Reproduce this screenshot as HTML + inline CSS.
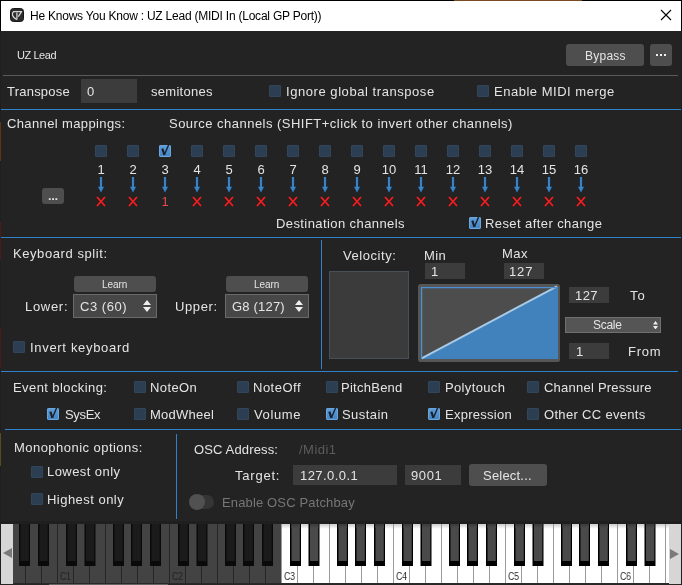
<!DOCTYPE html>
<html><head><meta charset="utf-8"><style>
html,body{margin:0;padding:0;}
body{width:682px;height:585px;background:#000;position:relative;overflow:hidden;font-family:"Liberation Sans", sans-serif;}
.r{position:absolute;}
.t{position:absolute;white-space:pre;line-height:normal;font-family:"Liberation Sans", sans-serif;will-change:transform;}
</style></head><body>
<div class="r" style="left:1px;top:1px;width:680px;height:30px;background:#fff;"></div><div class="r" style="left:1px;top:31px;width:680px;height:553px;background:#232323;"></div>
<div class="r" style="left:1px;top:521px;width:680px;height:64px;background:#1f1f1f;"></div>
<svg class="r" style="left:0;top:0" width="682" height="585" viewBox="0 0 682 585"><defs><linearGradient id="wg" x1="0" y1="0" x2="0" y2="1"><stop offset="0" stop-color="#cdcdcd"/><stop offset="1" stop-color="#fff"/></linearGradient><linearGradient id="bg" x1="0" y1="0" x2="0" y2="1"><stop offset="0" stop-color="#3a3a3a"/><stop offset="1" stop-color="#4a4a4a"/></linearGradient></defs><rect x="-55" y="524" width="16" height="59" fill="#434343"/><rect x="-55" y="524" width="1" height="59" fill="#262626"/><rect x="-39" y="524" width="16" height="59" fill="#434343"/><rect x="-39" y="524" width="1" height="59" fill="#262626"/><rect x="-23" y="524" width="16" height="59" fill="#434343"/><rect x="-23" y="524" width="1" height="59" fill="#262626"/><rect x="-7" y="524" width="16" height="59" fill="#434343"/><rect x="-7" y="524" width="1" height="59" fill="#262626"/><rect x="9" y="524" width="16" height="59" fill="#434343"/><rect x="9" y="524" width="1" height="59" fill="#262626"/><rect x="25" y="524" width="16" height="59" fill="#434343"/><rect x="25" y="524" width="1" height="59" fill="#262626"/><rect x="41" y="524" width="16" height="59" fill="#434343"/><rect x="41" y="524" width="1" height="59" fill="#262626"/><rect x="-46" y="524" width="11" height="42" fill="#0a0a0a"/><rect x="-44.5" y="524" width="8.3" height="37" fill="#1b1b1b"/><rect x="-27.5" y="524" width="11" height="42" fill="#0a0a0a"/><rect x="-26.0" y="524" width="8.3" height="37" fill="#1b1b1b"/><rect x="1" y="524" width="11" height="42" fill="#0a0a0a"/><rect x="2.5" y="524" width="8.3" height="37" fill="#1b1b1b"/><rect x="19" y="524" width="11" height="42" fill="#0a0a0a"/><rect x="20.5" y="524" width="8.3" height="37" fill="#1b1b1b"/><rect x="38" y="524" width="11" height="42" fill="#0a0a0a"/><rect x="39.5" y="524" width="8.3" height="37" fill="#1b1b1b"/><rect x="57" y="524" width="16" height="59" fill="#434343"/><rect x="57" y="524" width="1" height="59" fill="#262626"/><rect x="73" y="524" width="16" height="59" fill="#434343"/><rect x="73" y="524" width="1" height="59" fill="#262626"/><rect x="89" y="524" width="16" height="59" fill="#434343"/><rect x="89" y="524" width="1" height="59" fill="#262626"/><rect x="105" y="524" width="16" height="59" fill="#434343"/><rect x="105" y="524" width="1" height="59" fill="#262626"/><rect x="121" y="524" width="16" height="59" fill="#434343"/><rect x="121" y="524" width="1" height="59" fill="#262626"/><rect x="137" y="524" width="16" height="59" fill="#434343"/><rect x="137" y="524" width="1" height="59" fill="#262626"/><rect x="153" y="524" width="16" height="59" fill="#434343"/><rect x="153" y="524" width="1" height="59" fill="#262626"/><rect x="66" y="524" width="11" height="42" fill="#0a0a0a"/><rect x="67.5" y="524" width="8.3" height="37" fill="#1b1b1b"/><rect x="84.5" y="524" width="11" height="42" fill="#0a0a0a"/><rect x="86.0" y="524" width="8.3" height="37" fill="#1b1b1b"/><rect x="113" y="524" width="11" height="42" fill="#0a0a0a"/><rect x="114.5" y="524" width="8.3" height="37" fill="#1b1b1b"/><rect x="131" y="524" width="11" height="42" fill="#0a0a0a"/><rect x="132.5" y="524" width="8.3" height="37" fill="#1b1b1b"/><rect x="150" y="524" width="11" height="42" fill="#0a0a0a"/><rect x="151.5" y="524" width="8.3" height="37" fill="#1b1b1b"/><rect x="169" y="524" width="16" height="59" fill="#434343"/><rect x="169" y="524" width="1" height="59" fill="#262626"/><rect x="185" y="524" width="16" height="59" fill="#434343"/><rect x="185" y="524" width="1" height="59" fill="#262626"/><rect x="201" y="524" width="16" height="59" fill="#434343"/><rect x="201" y="524" width="1" height="59" fill="#262626"/><rect x="217" y="524" width="16" height="59" fill="#434343"/><rect x="217" y="524" width="1" height="59" fill="#262626"/><rect x="233" y="524" width="16" height="59" fill="#434343"/><rect x="233" y="524" width="1" height="59" fill="#262626"/><rect x="249" y="524" width="16" height="59" fill="#434343"/><rect x="249" y="524" width="1" height="59" fill="#262626"/><rect x="265" y="524" width="16" height="59" fill="#434343"/><rect x="265" y="524" width="1" height="59" fill="#262626"/><rect x="178" y="524" width="11" height="42" fill="#0a0a0a"/><rect x="179.5" y="524" width="8.3" height="37" fill="#1b1b1b"/><rect x="196.5" y="524" width="11" height="42" fill="#0a0a0a"/><rect x="198.0" y="524" width="8.3" height="37" fill="#1b1b1b"/><rect x="225" y="524" width="11" height="42" fill="#0a0a0a"/><rect x="226.5" y="524" width="8.3" height="37" fill="#1b1b1b"/><rect x="243" y="524" width="11" height="42" fill="#0a0a0a"/><rect x="244.5" y="524" width="8.3" height="37" fill="#1b1b1b"/><rect x="262" y="524" width="11" height="42" fill="#0a0a0a"/><rect x="263.5" y="524" width="8.3" height="37" fill="#1b1b1b"/><rect x="281" y="524" width="16" height="59" fill="#fff"/><rect x="281" y="524" width="16" height="5" fill="url(#wg)"/><rect x="281" y="524" width="1" height="59" fill="#9a9a9a"/><rect x="297" y="524" width="16" height="59" fill="#fff"/><rect x="297" y="524" width="16" height="5" fill="url(#wg)"/><rect x="297" y="524" width="1" height="59" fill="#9a9a9a"/><rect x="313" y="524" width="16" height="59" fill="#fff"/><rect x="313" y="524" width="16" height="5" fill="url(#wg)"/><rect x="313" y="524" width="1" height="59" fill="#9a9a9a"/><rect x="329" y="524" width="16" height="59" fill="#fff"/><rect x="329" y="524" width="16" height="5" fill="url(#wg)"/><rect x="329" y="524" width="1" height="59" fill="#9a9a9a"/><rect x="345" y="524" width="16" height="59" fill="#fff"/><rect x="345" y="524" width="16" height="5" fill="url(#wg)"/><rect x="345" y="524" width="1" height="59" fill="#9a9a9a"/><rect x="361" y="524" width="16" height="59" fill="#fff"/><rect x="361" y="524" width="16" height="5" fill="url(#wg)"/><rect x="361" y="524" width="1" height="59" fill="#9a9a9a"/><rect x="377" y="524" width="16" height="59" fill="#fff"/><rect x="377" y="524" width="16" height="5" fill="url(#wg)"/><rect x="377" y="524" width="1" height="59" fill="#9a9a9a"/><rect x="290" y="524" width="11" height="42" fill="#000"/><rect x="291.5" y="524" width="8.3" height="37" fill="#4a4a4a"/><rect x="291.5" y="524" width="8.3" height="4" fill="url(#bg)"/><rect x="308.5" y="524" width="11" height="42" fill="#000"/><rect x="310.0" y="524" width="8.3" height="37" fill="#4a4a4a"/><rect x="310.0" y="524" width="8.3" height="4" fill="url(#bg)"/><rect x="337" y="524" width="11" height="42" fill="#000"/><rect x="338.5" y="524" width="8.3" height="37" fill="#4a4a4a"/><rect x="338.5" y="524" width="8.3" height="4" fill="url(#bg)"/><rect x="355" y="524" width="11" height="42" fill="#000"/><rect x="356.5" y="524" width="8.3" height="37" fill="#4a4a4a"/><rect x="356.5" y="524" width="8.3" height="4" fill="url(#bg)"/><rect x="374" y="524" width="11" height="42" fill="#000"/><rect x="375.5" y="524" width="8.3" height="37" fill="#4a4a4a"/><rect x="375.5" y="524" width="8.3" height="4" fill="url(#bg)"/><rect x="393" y="524" width="16" height="59" fill="#fff"/><rect x="393" y="524" width="16" height="5" fill="url(#wg)"/><rect x="393" y="524" width="1" height="59" fill="#9a9a9a"/><rect x="409" y="524" width="16" height="59" fill="#fff"/><rect x="409" y="524" width="16" height="5" fill="url(#wg)"/><rect x="409" y="524" width="1" height="59" fill="#9a9a9a"/><rect x="425" y="524" width="16" height="59" fill="#fff"/><rect x="425" y="524" width="16" height="5" fill="url(#wg)"/><rect x="425" y="524" width="1" height="59" fill="#9a9a9a"/><rect x="441" y="524" width="16" height="59" fill="#fff"/><rect x="441" y="524" width="16" height="5" fill="url(#wg)"/><rect x="441" y="524" width="1" height="59" fill="#9a9a9a"/><rect x="457" y="524" width="16" height="59" fill="#fff"/><rect x="457" y="524" width="16" height="5" fill="url(#wg)"/><rect x="457" y="524" width="1" height="59" fill="#9a9a9a"/><rect x="473" y="524" width="16" height="59" fill="#fff"/><rect x="473" y="524" width="16" height="5" fill="url(#wg)"/><rect x="473" y="524" width="1" height="59" fill="#9a9a9a"/><rect x="489" y="524" width="16" height="59" fill="#fff"/><rect x="489" y="524" width="16" height="5" fill="url(#wg)"/><rect x="489" y="524" width="1" height="59" fill="#9a9a9a"/><rect x="402" y="524" width="11" height="42" fill="#000"/><rect x="403.5" y="524" width="8.3" height="37" fill="#4a4a4a"/><rect x="403.5" y="524" width="8.3" height="4" fill="url(#bg)"/><rect x="420.5" y="524" width="11" height="42" fill="#000"/><rect x="422.0" y="524" width="8.3" height="37" fill="#4a4a4a"/><rect x="422.0" y="524" width="8.3" height="4" fill="url(#bg)"/><rect x="449" y="524" width="11" height="42" fill="#000"/><rect x="450.5" y="524" width="8.3" height="37" fill="#4a4a4a"/><rect x="450.5" y="524" width="8.3" height="4" fill="url(#bg)"/><rect x="467" y="524" width="11" height="42" fill="#000"/><rect x="468.5" y="524" width="8.3" height="37" fill="#4a4a4a"/><rect x="468.5" y="524" width="8.3" height="4" fill="url(#bg)"/><rect x="486" y="524" width="11" height="42" fill="#000"/><rect x="487.5" y="524" width="8.3" height="37" fill="#4a4a4a"/><rect x="487.5" y="524" width="8.3" height="4" fill="url(#bg)"/><rect x="505" y="524" width="16" height="59" fill="#fff"/><rect x="505" y="524" width="16" height="5" fill="url(#wg)"/><rect x="505" y="524" width="1" height="59" fill="#9a9a9a"/><rect x="521" y="524" width="16" height="59" fill="#fff"/><rect x="521" y="524" width="16" height="5" fill="url(#wg)"/><rect x="521" y="524" width="1" height="59" fill="#9a9a9a"/><rect x="537" y="524" width="16" height="59" fill="#fff"/><rect x="537" y="524" width="16" height="5" fill="url(#wg)"/><rect x="537" y="524" width="1" height="59" fill="#9a9a9a"/><rect x="553" y="524" width="16" height="59" fill="#fff"/><rect x="553" y="524" width="16" height="5" fill="url(#wg)"/><rect x="553" y="524" width="1" height="59" fill="#9a9a9a"/><rect x="569" y="524" width="16" height="59" fill="#fff"/><rect x="569" y="524" width="16" height="5" fill="url(#wg)"/><rect x="569" y="524" width="1" height="59" fill="#9a9a9a"/><rect x="585" y="524" width="16" height="59" fill="#fff"/><rect x="585" y="524" width="16" height="5" fill="url(#wg)"/><rect x="585" y="524" width="1" height="59" fill="#9a9a9a"/><rect x="601" y="524" width="16" height="59" fill="#fff"/><rect x="601" y="524" width="16" height="5" fill="url(#wg)"/><rect x="601" y="524" width="1" height="59" fill="#9a9a9a"/><rect x="514" y="524" width="11" height="42" fill="#000"/><rect x="515.5" y="524" width="8.3" height="37" fill="#4a4a4a"/><rect x="515.5" y="524" width="8.3" height="4" fill="url(#bg)"/><rect x="532.5" y="524" width="11" height="42" fill="#000"/><rect x="534.0" y="524" width="8.3" height="37" fill="#4a4a4a"/><rect x="534.0" y="524" width="8.3" height="4" fill="url(#bg)"/><rect x="561" y="524" width="11" height="42" fill="#000"/><rect x="562.5" y="524" width="8.3" height="37" fill="#4a4a4a"/><rect x="562.5" y="524" width="8.3" height="4" fill="url(#bg)"/><rect x="579" y="524" width="11" height="42" fill="#000"/><rect x="580.5" y="524" width="8.3" height="37" fill="#4a4a4a"/><rect x="580.5" y="524" width="8.3" height="4" fill="url(#bg)"/><rect x="598" y="524" width="11" height="42" fill="#000"/><rect x="599.5" y="524" width="8.3" height="37" fill="#4a4a4a"/><rect x="599.5" y="524" width="8.3" height="4" fill="url(#bg)"/><rect x="617" y="524" width="16" height="59" fill="#fff"/><rect x="617" y="524" width="16" height="5" fill="url(#wg)"/><rect x="617" y="524" width="1" height="59" fill="#9a9a9a"/><rect x="633" y="524" width="16" height="59" fill="#fff"/><rect x="633" y="524" width="16" height="5" fill="url(#wg)"/><rect x="633" y="524" width="1" height="59" fill="#9a9a9a"/><rect x="649" y="524" width="16" height="59" fill="#fff"/><rect x="649" y="524" width="16" height="5" fill="url(#wg)"/><rect x="649" y="524" width="1" height="59" fill="#9a9a9a"/><rect x="665" y="524" width="16" height="59" fill="#fff"/><rect x="665" y="524" width="16" height="5" fill="url(#wg)"/><rect x="665" y="524" width="1" height="59" fill="#9a9a9a"/><rect x="681" y="524" width="16" height="59" fill="#fff"/><rect x="681" y="524" width="16" height="5" fill="url(#wg)"/><rect x="681" y="524" width="1" height="59" fill="#9a9a9a"/><rect x="626" y="524" width="11" height="42" fill="#000"/><rect x="627.5" y="524" width="8.3" height="37" fill="#4a4a4a"/><rect x="627.5" y="524" width="8.3" height="4" fill="url(#bg)"/><rect x="644.5" y="524" width="11" height="42" fill="#000"/><rect x="646.0" y="524" width="8.3" height="37" fill="#4a4a4a"/><rect x="646.0" y="524" width="8.3" height="4" fill="url(#bg)"/><rect x="673" y="524" width="11" height="42" fill="#000"/><rect x="674.5" y="524" width="8.3" height="37" fill="#4a4a4a"/><rect x="674.5" y="524" width="8.3" height="4" fill="url(#bg)"/><rect x="691" y="524" width="11" height="42" fill="#000"/><rect x="692.5" y="524" width="8.3" height="37" fill="#4a4a4a"/><rect x="692.5" y="524" width="8.3" height="4" fill="url(#bg)"/><rect x="710" y="524" width="11" height="42" fill="#000"/><rect x="711.5" y="524" width="8.3" height="37" fill="#4a4a4a"/><rect x="711.5" y="524" width="8.3" height="4" fill="url(#bg)"/><rect x="738" y="524" width="11" height="42" fill="#000"/><rect x="739.5" y="524" width="8.3" height="37" fill="#4a4a4a"/><rect x="739.5" y="524" width="8.3" height="4" fill="url(#bg)"/><rect x="756.5" y="524" width="11" height="42" fill="#000"/><rect x="758.0" y="524" width="8.3" height="37" fill="#4a4a4a"/><rect x="758.0" y="524" width="8.3" height="4" fill="url(#bg)"/><rect x="785" y="524" width="11" height="42" fill="#000"/><rect x="786.5" y="524" width="8.3" height="37" fill="#4a4a4a"/><rect x="786.5" y="524" width="8.3" height="4" fill="url(#bg)"/><rect x="803" y="524" width="11" height="42" fill="#000"/><rect x="804.5" y="524" width="8.3" height="37" fill="#4a4a4a"/><rect x="804.5" y="524" width="8.3" height="4" fill="url(#bg)"/><rect x="822" y="524" width="11" height="42" fill="#000"/><rect x="823.5" y="524" width="8.3" height="37" fill="#4a4a4a"/><rect x="823.5" y="524" width="8.3" height="4" fill="url(#bg)"/></svg>
<div class="t" style="left:60px;top:570px;font-size:10.5px;color:#222;transform:scaleX(0.82);transform-origin:0 0">C1</div>
<div class="t" style="left:172px;top:570px;font-size:10.5px;color:#222;transform:scaleX(0.82);transform-origin:0 0">C2</div>
<div class="t" style="left:284px;top:570px;font-size:10.5px;color:#2a2a2a;transform:scaleX(0.82);transform-origin:0 0">C3</div>
<div class="t" style="left:396px;top:570px;font-size:10.5px;color:#2a2a2a;transform:scaleX(0.82);transform-origin:0 0">C4</div>
<div class="t" style="left:508px;top:570px;font-size:10.5px;color:#2a2a2a;transform:scaleX(0.82);transform-origin:0 0">C5</div>
<div class="t" style="left:620px;top:570px;font-size:10.5px;color:#2a2a2a;transform:scaleX(0.82);transform-origin:0 0">C6</div>
<div class="r" style="left:1px;top:524px;width:12px;height:60px;background:#d6d6d6;"></div>
<svg class="r" style="left:3px;top:548px" width="9" height="11" viewBox="0 0 9 11"><path d="M0 5 L9 0 V10 Z" fill="#7a7a7a"/></svg>
<div class="r" style="left:669px;top:524px;width:12px;height:60px;background:#d6d6d6;"></div>
<svg class="r" style="left:670px;top:549px" width="9" height="11" viewBox="0 0 9 11"><path d="M9 5 L0 0 V10 Z" fill="#7a7a7a"/></svg>
<div class="r" style="left:13px;top:583px;width:656px;height:1px;background:#2a2a2a;"></div>
<div class="r" style="left:1px;top:584px;width:680px;height:1px;background:#262626;"></div>
<div class="r" style="left:49px;top:584px;width:119px;height:1px;background:#646464;"></div>
<div class="r" style="left:3px;top:75px;width:675px;height:1px;background:#5a5a5a;"></div><div class="r" style="left:1px;top:109px;width:680px;height:1px;background:#3080ca;"></div><div class="r" style="left:1px;top:237px;width:680px;height:1px;background:#3080ca;"></div><div class="r" style="left:321px;top:240px;width:1px;height:129px;background:#3080ca;"></div><div class="r" style="left:1px;top:371px;width:677px;height:1px;background:#3080ca;"></div><div class="r" style="left:5px;top:429px;width:676px;height:1px;background:#3080ca;"></div><div class="r" style="left:176px;top:434px;width:1px;height:85px;background:#3080ca;"></div><div class="r" style="left:566px;top:44px;width:78px;height:22px;background:#4e4e4e;border-radius:3px"></div><div class="r" style="left:650px;top:44px;width:22px;height:22px;background:#4e4e4e;border-radius:3px"></div><div class="r" style="left:42px;top:188px;width:22px;height:16px;background:#4e4e4e;border-radius:3px"></div><div class="r" style="left:74px;top:276px;width:82px;height:16px;background:#4e4e4e;border-radius:3px"></div><div class="r" style="left:226px;top:276px;width:82px;height:16px;background:#4e4e4e;border-radius:3px"></div><div class="r" style="left:469px;top:464px;width:78px;height:22px;background:#4e4e4e;border-radius:3px"></div><div class="r" style="left:656px;top:54px;width:2px;height:2px;background:#f0f0f0;"></div><div class="r" style="left:660px;top:54px;width:2px;height:2px;background:#f0f0f0;"></div><div class="r" style="left:664px;top:54px;width:2px;height:2px;background:#f0f0f0;"></div><svg class="r" style="left:42px;top:188px" width="22" height="16" viewBox="0 0 22 16"><rect x="6.8" y="10.2" width="1.9" height="1.8" fill="#e0e0e0"/><rect x="10.1" y="10.2" width="1.9" height="1.8" fill="#e0e0e0"/><rect x="13.4" y="10.2" width="1.9" height="1.8" fill="#e0e0e0"/></svg><div class="r" style="left:81px;top:79px;width:56px;height:24px;background:#3c3c3c;"></div><div class="r" style="left:425px;top:263px;width:40px;height:16px;background:#3c3c3c;"></div><div class="r" style="left:504px;top:263px;width:40px;height:16px;background:#3c3c3c;"></div><div class="r" style="left:569px;top:287px;width:40px;height:16px;background:#3c3c3c;"></div><div class="r" style="left:569px;top:343px;width:40px;height:16px;background:#3c3c3c;"></div><div class="r" style="left:293px;top:465px;width:104px;height:20px;background:#3c3c3c;"></div><div class="r" style="left:405px;top:465px;width:56px;height:20px;background:#3c3c3c;"></div><div class="r" style="left:73px;top:294px;width:84px;height:24px;background:#474747;box-sizing:border-box;border:1px solid #6a6a6a"></div><div class="r" style="left:225px;top:294px;width:84px;height:24px;background:#474747;box-sizing:border-box;border:1px solid #6a6a6a"></div><div class="r" style="left:565px;top:317px;width:96px;height:16px;background:#555;box-sizing:border-box;border:1px solid #707070"></div><div class="r" style="left:329px;top:271px;width:80px;height:88px;background:#3b3b3b;box-sizing:border-box;border:1px solid #48505a"></div><div class="r" style="left:95px;top:145px;width:12px;height:12px;background:#2b3e52;border-radius:1px;box-sizing:border-box;border:1px solid #31465b"></div><div class="r" style="left:127px;top:145px;width:12px;height:12px;background:#2b3e52;border-radius:1px;box-sizing:border-box;border:1px solid #31465b"></div><div class="r" style="left:159px;top:145px;width:12px;height:12px;background:linear-gradient(#5c9cd8,#4585c5);border-radius:1px;box-sizing:border-box;border:1px solid #6aa6dc"></div><svg class="r" style="left:159px;top:143px" width="14" height="15" viewBox="0 0 14 15"><path d="M3.3 5.6 L5.4 11.8" stroke="#18202a" stroke-width="2.1" fill="none"/><path d="M5.4 11.8 L10 1" stroke="#18202a" stroke-width="1.4" fill="none"/></svg><div class="r" style="left:191px;top:145px;width:12px;height:12px;background:#2b3e52;border-radius:1px;box-sizing:border-box;border:1px solid #31465b"></div><div class="r" style="left:223px;top:145px;width:12px;height:12px;background:#2b3e52;border-radius:1px;box-sizing:border-box;border:1px solid #31465b"></div><div class="r" style="left:255px;top:145px;width:12px;height:12px;background:#2b3e52;border-radius:1px;box-sizing:border-box;border:1px solid #31465b"></div><div class="r" style="left:287px;top:145px;width:12px;height:12px;background:#2b3e52;border-radius:1px;box-sizing:border-box;border:1px solid #31465b"></div><div class="r" style="left:319px;top:145px;width:12px;height:12px;background:#2b3e52;border-radius:1px;box-sizing:border-box;border:1px solid #31465b"></div><div class="r" style="left:351px;top:145px;width:12px;height:12px;background:#2b3e52;border-radius:1px;box-sizing:border-box;border:1px solid #31465b"></div><div class="r" style="left:383px;top:145px;width:12px;height:12px;background:#2b3e52;border-radius:1px;box-sizing:border-box;border:1px solid #31465b"></div><div class="r" style="left:415px;top:145px;width:12px;height:12px;background:#2b3e52;border-radius:1px;box-sizing:border-box;border:1px solid #31465b"></div><div class="r" style="left:447px;top:145px;width:12px;height:12px;background:#2b3e52;border-radius:1px;box-sizing:border-box;border:1px solid #31465b"></div><div class="r" style="left:479px;top:145px;width:12px;height:12px;background:#2b3e52;border-radius:1px;box-sizing:border-box;border:1px solid #31465b"></div><div class="r" style="left:511px;top:145px;width:12px;height:12px;background:#2b3e52;border-radius:1px;box-sizing:border-box;border:1px solid #31465b"></div><div class="r" style="left:543px;top:145px;width:12px;height:12px;background:#2b3e52;border-radius:1px;box-sizing:border-box;border:1px solid #31465b"></div><div class="r" style="left:575px;top:145px;width:12px;height:12px;background:#2b3e52;border-radius:1px;box-sizing:border-box;border:1px solid #31465b"></div><div class="r" style="left:269px;top:85px;width:12px;height:12px;background:#2b3e52;border-radius:1px;box-sizing:border-box;border:1px solid #31465b"></div><div class="r" style="left:477px;top:85px;width:12px;height:12px;background:#2b3e52;border-radius:1px;box-sizing:border-box;border:1px solid #31465b"></div><div class="r" style="left:469px;top:217px;width:12px;height:12px;background:linear-gradient(#5c9cd8,#4585c5);border-radius:1px;box-sizing:border-box;border:1px solid #6aa6dc"></div><svg class="r" style="left:469px;top:215px" width="14" height="15" viewBox="0 0 14 15"><path d="M3.3 5.6 L5.4 11.8" stroke="#18202a" stroke-width="2.1" fill="none"/><path d="M5.4 11.8 L10 1" stroke="#18202a" stroke-width="1.4" fill="none"/></svg><div class="r" style="left:13px;top:341px;width:12px;height:12px;background:#2b3e52;border-radius:1px;box-sizing:border-box;border:1px solid #31465b"></div><div class="r" style="left:134px;top:381px;width:12px;height:12px;background:#2b3e52;border-radius:1px;box-sizing:border-box;border:1px solid #31465b"></div><div class="r" style="left:237px;top:381px;width:12px;height:12px;background:#2b3e52;border-radius:1px;box-sizing:border-box;border:1px solid #31465b"></div><div class="r" style="left:326px;top:381px;width:12px;height:12px;background:#2b3e52;border-radius:1px;box-sizing:border-box;border:1px solid #31465b"></div><div class="r" style="left:428px;top:381px;width:12px;height:12px;background:#2b3e52;border-radius:1px;box-sizing:border-box;border:1px solid #31465b"></div><div class="r" style="left:527px;top:381px;width:12px;height:12px;background:#2b3e52;border-radius:1px;box-sizing:border-box;border:1px solid #31465b"></div><div class="r" style="left:47px;top:408px;width:12px;height:12px;background:linear-gradient(#5c9cd8,#4585c5);border-radius:1px;box-sizing:border-box;border:1px solid #6aa6dc"></div><svg class="r" style="left:47px;top:406px" width="14" height="15" viewBox="0 0 14 15"><path d="M3.3 5.6 L5.4 11.8" stroke="#18202a" stroke-width="2.1" fill="none"/><path d="M5.4 11.8 L10 1" stroke="#18202a" stroke-width="1.4" fill="none"/></svg><div class="r" style="left:134px;top:408px;width:12px;height:12px;background:#2b3e52;border-radius:1px;box-sizing:border-box;border:1px solid #31465b"></div><div class="r" style="left:237px;top:408px;width:12px;height:12px;background:#2b3e52;border-radius:1px;box-sizing:border-box;border:1px solid #31465b"></div><div class="r" style="left:326px;top:408px;width:12px;height:12px;background:linear-gradient(#5c9cd8,#4585c5);border-radius:1px;box-sizing:border-box;border:1px solid #6aa6dc"></div><svg class="r" style="left:326px;top:406px" width="14" height="15" viewBox="0 0 14 15"><path d="M3.3 5.6 L5.4 11.8" stroke="#18202a" stroke-width="2.1" fill="none"/><path d="M5.4 11.8 L10 1" stroke="#18202a" stroke-width="1.4" fill="none"/></svg><div class="r" style="left:428px;top:408px;width:12px;height:12px;background:linear-gradient(#5c9cd8,#4585c5);border-radius:1px;box-sizing:border-box;border:1px solid #6aa6dc"></div><svg class="r" style="left:428px;top:406px" width="14" height="15" viewBox="0 0 14 15"><path d="M3.3 5.6 L5.4 11.8" stroke="#18202a" stroke-width="2.1" fill="none"/><path d="M5.4 11.8 L10 1" stroke="#18202a" stroke-width="1.4" fill="none"/></svg><div class="r" style="left:527px;top:408px;width:12px;height:12px;background:#2b3e52;border-radius:1px;box-sizing:border-box;border:1px solid #31465b"></div><div class="r" style="left:31px;top:466px;width:12px;height:12px;background:#2b3e52;border-radius:1px;box-sizing:border-box;border:1px solid #31465b"></div><div class="r" style="left:31px;top:493px;width:12px;height:12px;background:#2b3e52;border-radius:1px;box-sizing:border-box;border:1px solid #31465b"></div><svg class="r" style="left:143px;top:300px" width="8" height="12" viewBox="0 0 8 12"><path d="M0 5.0 L4.0 0 L8 5.0 Z M0 7.0 L4.0 12 L8 7.0 Z" fill="#eee"/></svg><svg class="r" style="left:295px;top:300px" width="8" height="12" viewBox="0 0 8 12"><path d="M0 5.0 L4.0 0 L8 5.0 Z M0 7.0 L4.0 12 L8 7.0 Z" fill="#eee"/></svg><svg class="r" style="left:652.5px;top:320.5px" width="5" height="8.5" viewBox="0 0 5 8.5"><path d="M0 3.5 L2.5 0 L5 3.5 Z M0 5.0 L2.5 8.5 L5 5.0 Z" fill="#eee"/></svg><svg class="r" style="left:418px;top:284px" width="142" height="78" viewBox="0 0 142 78">
<rect x="0" y="0" width="142" height="78" rx="2.5" fill="#565656"/>
<rect x="3" y="3" width="137" height="72" fill="#4d4d4d"/>
<path d="M3.5 74.5 L139 2.5 L140 3 L140 75 L3 75 Z" fill="#4182bc"/>
<path d="M3.6 74.4 L139 2.4" stroke="#a8cae6" stroke-width="2"/>
<path d="M3.6 75 V3.6 H140" stroke="#4a90d4" stroke-width="1.3" fill="none"/>
</svg><div class="r" style="left:190px;top:495px;width:24px;height:14px;background:#353535;border-radius:7px"></div><div class="r" style="left:189px;top:494px;width:16px;height:16px;background:#515151;border-radius:8px"></div><svg class="r" style="left:660px;top:9px" width="12" height="12" viewBox="0 0 12 12"><path d="M1 1 L11 11 M11 1 L1 11" stroke="#000" stroke-width="1.1"/></svg><svg class="r" style="left:10px;top:8px" width="14" height="14" viewBox="0 0 14 14"><rect x="0.5" y="0.5" width="13" height="13" rx="3" fill="#2c2c2c" stroke="#141414" stroke-width="1"/><path d="M3.6 3.6 H11.6 L8.3 8.6 M3.6 3.6 C1.4 5.5 2 9.5 6.9 11.6" stroke="#d4d4d4" stroke-width="1.3" fill="none" stroke-linejoin="round"/><path d="M6.9 4.6 V11.6" stroke="#bcbcbc" stroke-width="1.5"/></svg>
<div class="t c" style="left:81px;top:162px;width:40px;text-align:center;font-size:13px;color:#e4e4e4">1</div>
<svg class="r" style="left:96px;top:176px" width="10" height="18" viewBox="0 0 10 18"><path d="M5 1 V11" stroke="#3585c8" stroke-width="2.2"/><path d="M2 10.8 L8 10.8 L5 16.6 Z" fill="#3585c8"/></svg>
<svg class="r" style="left:96px;top:196px" width="10" height="11" viewBox="0 0 10 11"><path d="M1 1 L9 10 M9 1 L1 10" stroke="#ff1a1a" stroke-width="1.7"/></svg>
<div class="t c" style="left:113px;top:162px;width:40px;text-align:center;font-size:13px;color:#e4e4e4">2</div>
<svg class="r" style="left:128px;top:176px" width="10" height="18" viewBox="0 0 10 18"><path d="M5 1 V11" stroke="#3585c8" stroke-width="2.2"/><path d="M2 10.8 L8 10.8 L5 16.6 Z" fill="#3585c8"/></svg>
<svg class="r" style="left:128px;top:196px" width="10" height="11" viewBox="0 0 10 11"><path d="M1 1 L9 10 M9 1 L1 10" stroke="#ff1a1a" stroke-width="1.7"/></svg>
<div class="t c" style="left:145px;top:162px;width:40px;text-align:center;font-size:13px;color:#e4e4e4">3</div>
<svg class="r" style="left:160px;top:176px" width="10" height="18" viewBox="0 0 10 18"><path d="M5 1 V11" stroke="#3585c8" stroke-width="2.2"/><path d="M2 10.8 L8 10.8 L5 16.6 Z" fill="#3585c8"/></svg>
<div class="t c" style="left:145px;top:194px;width:40px;text-align:center;font-size:13px;color:#e84a4a">1</div>
<div class="t c" style="left:177px;top:162px;width:40px;text-align:center;font-size:13px;color:#e4e4e4">4</div>
<svg class="r" style="left:192px;top:176px" width="10" height="18" viewBox="0 0 10 18"><path d="M5 1 V11" stroke="#3585c8" stroke-width="2.2"/><path d="M2 10.8 L8 10.8 L5 16.6 Z" fill="#3585c8"/></svg>
<svg class="r" style="left:192px;top:196px" width="10" height="11" viewBox="0 0 10 11"><path d="M1 1 L9 10 M9 1 L1 10" stroke="#ff1a1a" stroke-width="1.7"/></svg>
<div class="t c" style="left:209px;top:162px;width:40px;text-align:center;font-size:13px;color:#e4e4e4">5</div>
<svg class="r" style="left:224px;top:176px" width="10" height="18" viewBox="0 0 10 18"><path d="M5 1 V11" stroke="#3585c8" stroke-width="2.2"/><path d="M2 10.8 L8 10.8 L5 16.6 Z" fill="#3585c8"/></svg>
<svg class="r" style="left:224px;top:196px" width="10" height="11" viewBox="0 0 10 11"><path d="M1 1 L9 10 M9 1 L1 10" stroke="#ff1a1a" stroke-width="1.7"/></svg>
<div class="t c" style="left:241px;top:162px;width:40px;text-align:center;font-size:13px;color:#e4e4e4">6</div>
<svg class="r" style="left:256px;top:176px" width="10" height="18" viewBox="0 0 10 18"><path d="M5 1 V11" stroke="#3585c8" stroke-width="2.2"/><path d="M2 10.8 L8 10.8 L5 16.6 Z" fill="#3585c8"/></svg>
<svg class="r" style="left:256px;top:196px" width="10" height="11" viewBox="0 0 10 11"><path d="M1 1 L9 10 M9 1 L1 10" stroke="#ff1a1a" stroke-width="1.7"/></svg>
<div class="t c" style="left:273px;top:162px;width:40px;text-align:center;font-size:13px;color:#e4e4e4">7</div>
<svg class="r" style="left:288px;top:176px" width="10" height="18" viewBox="0 0 10 18"><path d="M5 1 V11" stroke="#3585c8" stroke-width="2.2"/><path d="M2 10.8 L8 10.8 L5 16.6 Z" fill="#3585c8"/></svg>
<svg class="r" style="left:288px;top:196px" width="10" height="11" viewBox="0 0 10 11"><path d="M1 1 L9 10 M9 1 L1 10" stroke="#ff1a1a" stroke-width="1.7"/></svg>
<div class="t c" style="left:305px;top:162px;width:40px;text-align:center;font-size:13px;color:#e4e4e4">8</div>
<svg class="r" style="left:320px;top:176px" width="10" height="18" viewBox="0 0 10 18"><path d="M5 1 V11" stroke="#3585c8" stroke-width="2.2"/><path d="M2 10.8 L8 10.8 L5 16.6 Z" fill="#3585c8"/></svg>
<svg class="r" style="left:320px;top:196px" width="10" height="11" viewBox="0 0 10 11"><path d="M1 1 L9 10 M9 1 L1 10" stroke="#ff1a1a" stroke-width="1.7"/></svg>
<div class="t c" style="left:337px;top:162px;width:40px;text-align:center;font-size:13px;color:#e4e4e4">9</div>
<svg class="r" style="left:352px;top:176px" width="10" height="18" viewBox="0 0 10 18"><path d="M5 1 V11" stroke="#3585c8" stroke-width="2.2"/><path d="M2 10.8 L8 10.8 L5 16.6 Z" fill="#3585c8"/></svg>
<svg class="r" style="left:352px;top:196px" width="10" height="11" viewBox="0 0 10 11"><path d="M1 1 L9 10 M9 1 L1 10" stroke="#ff1a1a" stroke-width="1.7"/></svg>
<div class="t c" style="left:369px;top:162px;width:40px;text-align:center;font-size:13px;color:#e4e4e4">10</div>
<svg class="r" style="left:384px;top:176px" width="10" height="18" viewBox="0 0 10 18"><path d="M5 1 V11" stroke="#3585c8" stroke-width="2.2"/><path d="M2 10.8 L8 10.8 L5 16.6 Z" fill="#3585c8"/></svg>
<svg class="r" style="left:384px;top:196px" width="10" height="11" viewBox="0 0 10 11"><path d="M1 1 L9 10 M9 1 L1 10" stroke="#ff1a1a" stroke-width="1.7"/></svg>
<div class="t c" style="left:401px;top:162px;width:40px;text-align:center;font-size:13px;color:#e4e4e4">11</div>
<svg class="r" style="left:416px;top:176px" width="10" height="18" viewBox="0 0 10 18"><path d="M5 1 V11" stroke="#3585c8" stroke-width="2.2"/><path d="M2 10.8 L8 10.8 L5 16.6 Z" fill="#3585c8"/></svg>
<svg class="r" style="left:416px;top:196px" width="10" height="11" viewBox="0 0 10 11"><path d="M1 1 L9 10 M9 1 L1 10" stroke="#ff1a1a" stroke-width="1.7"/></svg>
<div class="t c" style="left:433px;top:162px;width:40px;text-align:center;font-size:13px;color:#e4e4e4">12</div>
<svg class="r" style="left:448px;top:176px" width="10" height="18" viewBox="0 0 10 18"><path d="M5 1 V11" stroke="#3585c8" stroke-width="2.2"/><path d="M2 10.8 L8 10.8 L5 16.6 Z" fill="#3585c8"/></svg>
<svg class="r" style="left:448px;top:196px" width="10" height="11" viewBox="0 0 10 11"><path d="M1 1 L9 10 M9 1 L1 10" stroke="#ff1a1a" stroke-width="1.7"/></svg>
<div class="t c" style="left:465px;top:162px;width:40px;text-align:center;font-size:13px;color:#e4e4e4">13</div>
<svg class="r" style="left:480px;top:176px" width="10" height="18" viewBox="0 0 10 18"><path d="M5 1 V11" stroke="#3585c8" stroke-width="2.2"/><path d="M2 10.8 L8 10.8 L5 16.6 Z" fill="#3585c8"/></svg>
<svg class="r" style="left:480px;top:196px" width="10" height="11" viewBox="0 0 10 11"><path d="M1 1 L9 10 M9 1 L1 10" stroke="#ff1a1a" stroke-width="1.7"/></svg>
<div class="t c" style="left:497px;top:162px;width:40px;text-align:center;font-size:13px;color:#e4e4e4">14</div>
<svg class="r" style="left:512px;top:176px" width="10" height="18" viewBox="0 0 10 18"><path d="M5 1 V11" stroke="#3585c8" stroke-width="2.2"/><path d="M2 10.8 L8 10.8 L5 16.6 Z" fill="#3585c8"/></svg>
<svg class="r" style="left:512px;top:196px" width="10" height="11" viewBox="0 0 10 11"><path d="M1 1 L9 10 M9 1 L1 10" stroke="#ff1a1a" stroke-width="1.7"/></svg>
<div class="t c" style="left:529px;top:162px;width:40px;text-align:center;font-size:13px;color:#e4e4e4">15</div>
<svg class="r" style="left:544px;top:176px" width="10" height="18" viewBox="0 0 10 18"><path d="M5 1 V11" stroke="#3585c8" stroke-width="2.2"/><path d="M2 10.8 L8 10.8 L5 16.6 Z" fill="#3585c8"/></svg>
<svg class="r" style="left:544px;top:196px" width="10" height="11" viewBox="0 0 10 11"><path d="M1 1 L9 10 M9 1 L1 10" stroke="#ff1a1a" stroke-width="1.7"/></svg>
<div class="t c" style="left:561px;top:162px;width:40px;text-align:center;font-size:13px;color:#e4e4e4">16</div>
<svg class="r" style="left:576px;top:176px" width="10" height="18" viewBox="0 0 10 18"><path d="M5 1 V11" stroke="#3585c8" stroke-width="2.2"/><path d="M2 10.8 L8 10.8 L5 16.6 Z" fill="#3585c8"/></svg>
<svg class="r" style="left:576px;top:196px" width="10" height="11" viewBox="0 0 10 11"><path d="M1 1 L9 10 M9 1 L1 10" stroke="#ff1a1a" stroke-width="1.7"/></svg>
<div class="t" style="left:30.00px;top:9.00px;font-size:12px;letter-spacing:-0.225px;color:#000">He Knows You Know : UZ Lead (MIDI In (Local GP Port))</div>
<div class="t" style="left:16.60px;top:49.00px;font-size:11px;letter-spacing:-0.445px;color:#e4e4e4">UZ Lead</div>
<div class="t" style="left:584.80px;top:48.60px;font-size:12px;letter-spacing:0.250px;color:#e4e4e4">Bypass</div>
<div class="t" style="left:7.00px;top:84.00px;font-size:13px;letter-spacing:0.224px;color:#e4e4e4">Transpose</div>
<div class="t" style="left:87.00px;top:84.00px;font-size:13px;letter-spacing:0.000px;color:#e4e4e4">0</div>
<div class="t" style="left:150.60px;top:84.00px;font-size:13px;letter-spacing:0.294px;color:#e4e4e4">semitones</div>
<div class="t" style="left:285.60px;top:84.00px;font-size:13px;letter-spacing:0.557px;color:#e4e4e4">Ignore global transpose</div>
<div class="t" style="left:494.00px;top:84.00px;font-size:13px;letter-spacing:0.515px;color:#e4e4e4">Enable MIDI merge</div>
<div class="t" style="left:6.60px;top:115.80px;font-size:13px;letter-spacing:0.375px;color:#e4e4e4">Channel mappings:</div>
<div class="t" style="left:169.00px;top:115.80px;font-size:13px;letter-spacing:0.473px;color:#e4e4e4">Source channels (SHIFT+click to invert other channels)</div>
<div class="t" style="left:276.00px;top:216.00px;font-size:13px;letter-spacing:0.411px;color:#e4e4e4">Destination channels</div>
<div class="t" style="left:485.30px;top:216.30px;font-size:13px;letter-spacing:0.417px;color:#e4e4e4">Reset after change</div>
<div class="t" style="left:13.40px;top:246.00px;font-size:13px;letter-spacing:0.573px;color:#e4e4e4">Keyboard split:</div>
<div class="t" style="left:102.40px;top:279.20px;font-size:10px;letter-spacing:-0.054px;color:#e4e4e4">Learn</div>
<div class="t" style="left:254.40px;top:279.20px;font-size:10px;letter-spacing:-0.054px;color:#e4e4e4">Learn</div>
<div class="t" style="left:24.80px;top:299.30px;font-size:13px;letter-spacing:0.699px;color:#e4e4e4">Lower:</div>
<div class="t" style="left:79.90px;top:299.30px;font-size:13px;letter-spacing:0.530px;color:#e4e4e4">C3 (60)</div>
<div class="t" style="left:175.20px;top:299.30px;font-size:13px;letter-spacing:0.599px;color:#e4e4e4">Upper:</div>
<div class="t" style="left:231.60px;top:299.30px;font-size:13px;letter-spacing:0.190px;color:#e4e4e4">G8 (127)</div>
<div class="t" style="left:29.90px;top:339.60px;font-size:13px;letter-spacing:0.680px;color:#e4e4e4">Invert keyboard</div>
<div class="t" style="left:343.00px;top:248.00px;font-size:13px;letter-spacing:0.562px;color:#e4e4e4">Velocity:</div>
<div class="t" style="left:423.70px;top:248.40px;font-size:13px;letter-spacing:0.441px;color:#e4e4e4">Min</div>
<div class="t" style="left:501.70px;top:246.30px;font-size:13px;letter-spacing:0.420px;color:#e4e4e4">Max</div>
<div class="t" style="left:431.10px;top:264.00px;font-size:13px;letter-spacing:0.000px;color:#e4e4e4">1</div>
<div class="t" style="left:509.20px;top:264.00px;font-size:13px;letter-spacing:0.870px;color:#e4e4e4">127</div>
<div class="t" style="left:574.60px;top:287.80px;font-size:13px;letter-spacing:0.420px;color:#e4e4e4">127</div>
<div class="t" style="left:630.40px;top:287.80px;font-size:13px;letter-spacing:0.900px;color:#e4e4e4">To</div>
<div class="t" style="left:592.80px;top:318.00px;font-size:12px;letter-spacing:-0.286px;color:#e4e4e4">Scale</div>
<div class="t" style="left:575.50px;top:344.00px;font-size:13px;letter-spacing:0.000px;color:#e4e4e4">1</div>
<div class="t" style="left:627.60px;top:344.00px;font-size:13px;letter-spacing:0.733px;color:#e4e4e4">From</div>
<div class="t" style="left:13.00px;top:380.20px;font-size:13px;letter-spacing:0.411px;color:#e4e4e4">Event blocking:</div>
<div class="t" style="left:150.40px;top:379.70px;font-size:13px;letter-spacing:0.386px;color:#e4e4e4">NoteOn</div>
<div class="t" style="left:253.20px;top:379.70px;font-size:13px;letter-spacing:0.492px;color:#e4e4e4">NoteOff</div>
<div class="t" style="left:341.30px;top:379.70px;font-size:13px;letter-spacing:0.259px;color:#e4e4e4">PitchBend</div>
<div class="t" style="left:444.80px;top:379.70px;font-size:13px;letter-spacing:0.355px;color:#e4e4e4">Polytouch</div>
<div class="t" style="left:544.20px;top:379.70px;font-size:13px;letter-spacing:0.232px;color:#e4e4e4">Channel Pressure</div>
<div class="t" style="left:64.60px;top:407.30px;font-size:13px;letter-spacing:-0.310px;color:#e4e4e4">SysEx</div>
<div class="t" style="left:150.40px;top:407.30px;font-size:13px;letter-spacing:0.250px;color:#e4e4e4">ModWheel</div>
<div class="t" style="left:254.20px;top:407.30px;font-size:13px;letter-spacing:0.614px;color:#e4e4e4">Volume</div>
<div class="t" style="left:342.30px;top:407.30px;font-size:13px;letter-spacing:0.428px;color:#e4e4e4">Sustain</div>
<div class="t" style="left:444.80px;top:407.30px;font-size:13px;letter-spacing:0.258px;color:#e4e4e4">Expression</div>
<div class="t" style="left:544.20px;top:407.30px;font-size:13px;letter-spacing:0.320px;color:#e4e4e4">Other CC events</div>
<div class="t" style="left:13.50px;top:440.00px;font-size:13px;letter-spacing:0.463px;color:#e4e4e4">Monophonic options:</div>
<div class="t" style="left:47.30px;top:464.30px;font-size:13px;letter-spacing:0.435px;color:#e4e4e4">Lowest only</div>
<div class="t" style="left:47.30px;top:492.00px;font-size:13px;letter-spacing:0.469px;color:#e4e4e4">Highest only</div>
<div class="t" style="left:194.40px;top:442.40px;font-size:13px;letter-spacing:0.139px;color:#e4e4e4">OSC Address:</div>
<div class="t" style="left:298.80px;top:442.40px;font-size:13px;letter-spacing:0.471px;color:#5c5c5c">/Midi1</div>
<div class="t" style="left:235.00px;top:468.20px;font-size:13px;letter-spacing:0.778px;color:#e4e4e4">Target:</div>
<div class="t" style="left:299.70px;top:468.20px;font-size:13px;letter-spacing:0.439px;color:#e4e4e4">127.0.0.1</div>
<div class="t" style="left:410.50px;top:468.20px;font-size:13px;letter-spacing:0.603px;color:#e4e4e4">9001</div>
<div class="t" style="left:483.20px;top:468.20px;font-size:13px;letter-spacing:0.206px;color:#e4e4e4">Select...</div>
<div class="t" style="left:221.50px;top:495.20px;font-size:13px;letter-spacing:0.146px;color:#767676">Enable OSC Patchbay</div>
<div class="r" style="left:681px;top:0;width:1px;height:585px;background:#1f1f1f"></div><div class="r" style="left:0;top:0;width:1px;height:585px;background:#1f1f1f"></div><div class="r" style="left:681px;top:0;width:1px;height:31px;background:#000"></div><div class="r" style="left:0;top:0;width:1px;height:31px;background:#000"></div><div class="r" style="left:0;top:0;width:682px;height:1px;background:#000"></div><div class="r" style="left:454px;top:0;width:128px;height:1px;background:#7a4a22"></div><div class="r" style="left:0;top:122px;width:1px;height:39px;background:#5c3418"></div><div class="r" style="left:0;top:222px;width:1px;height:38px;background:#4a1c1c"></div><div class="r" style="left:0;top:328px;width:1px;height:40px;background:#4a1c1c"></div><div class="r" style="left:0;top:433px;width:1px;height:33px;background:#5a4a20"></div>
</body></html>
